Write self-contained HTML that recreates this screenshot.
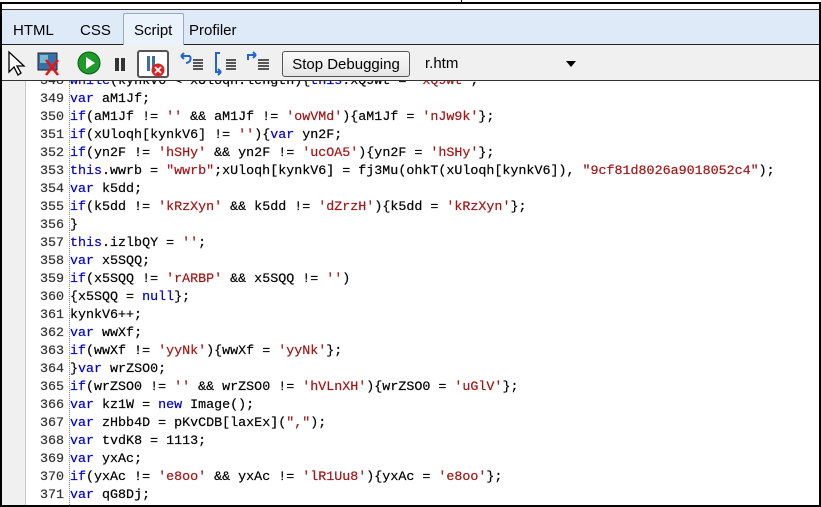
<!DOCTYPE html>
<html><head><meta charset="utf-8"><style>
*{margin:0;padding:0;box-sizing:border-box}
body{width:821px;height:507px;overflow:hidden;background:#fff;position:relative;font-family:"Liberation Sans",sans-serif}
.abs{position:absolute}
#code{position:absolute;left:2px;top:81px;width:817px;height:424px;overflow:hidden;background:#fff}
#gut{position:absolute;left:0;top:0;width:24px;height:100%;background:#f0f0f0;border-right:1px solid #c8c8c8}
#dots{position:absolute;left:67px;top:0;height:100%;border-left:1px dotted #888}
.lines{position:absolute;top:-8px;left:0;font-family:"Liberation Mono",monospace;font-size:13.35px;line-height:18px;white-space:pre;color:#000;-webkit-text-stroke:0.2px}
.ln{position:absolute;left:30px;width:32px;text-align:right;color:#333}
.tx{position:absolute;left:68px}
.k{color:#0000cc}.s{color:#a31515}
.tab{position:absolute;top:15px;font-size:15px;height:31px;line-height:32px}
.btn{position:absolute;top:51px;font-size:15px}
</style></head><body>
<div class="abs" style="left:0;top:2px;width:821px;height:505px;border:2px solid #000;border-bottom-width:2px"></div>
<div class="abs" style="left:461px;top:0;width:1px;height:4px;background:#000"></div>
<div class="abs" style="left:2px;top:9px;width:817px;height:35px;background:#dfeaf8;border-top:1px solid #333"></div>
<div class="abs" style="left:2px;top:44px;width:817px;height:1px;background:#222"></div>
<div class="abs" style="left:2px;top:45px;width:817px;height:35px;background:#f0f0f0"></div>
<div class="abs" style="left:2px;top:80px;width:817px;height:1px;background:#333"></div>
<div class="abs" style="left:123px;top:13px;width:61px;height:32px;background:#eaf2fc;border:1px solid #9ab;border-bottom:none;border-radius:2px 2px 0 0"></div>
<div class="tab" style="left:13px">HTML</div>
<div class="tab" style="left:80px">CSS</div>
<div class="tab" style="left:134px">Script</div>
<div class="tab" style="left:189px">Profiler</div>
<svg class="abs" style="left:6px;top:50px" width="22" height="28"><path d="M3 2 L3 22 L8 17 L12 25 L15 23 L11 16 L18 16 Z" fill="#fff" stroke="#000" stroke-width="1.3"/></svg>
<svg class="abs" style="left:36px;top:50px" width="26" height="28"><rect x="2" y="3" width="19" height="17" fill="#3a6ea8" stroke="#222"/><rect x="4" y="5" width="8" height="8" fill="#7bc"/><path d="M10 10 L22 25 M22 10 L10 25" stroke="#e11" stroke-width="2.5"/></svg>
<svg class="abs" style="left:77px;top:50px" width="26" height="26"><circle cx="12" cy="13" r="11" fill="#1c9a2a" stroke="#0a5a14"/><path d="M9 7 L18 13 L9 19 Z" fill="#fff"/></svg>
<div class="abs" style="left:115px;top:58px;width:4px;height:13px;background:#333"></div>
<div class="abs" style="left:121px;top:58px;width:4px;height:13px;background:#333"></div>
<div class="abs" style="left:137px;top:50px;width:32px;height:28px;border:2px solid #555;border-radius:3px;background:#fff"></div>
<div class="abs" style="left:147px;top:56px;width:3px;height:15px;background:#3a6ea8"></div>
<div class="abs" style="left:152px;top:56px;width:3px;height:15px;background:#3a6ea8"></div>
<svg class="abs" style="left:150px;top:62px" width="16" height="16"><circle cx="8" cy="8" r="6.5" fill="#d22"/><path d="M5 5 L11 11 M11 5 L5 11" stroke="#fff" stroke-width="1.8"/></svg>
<svg class="abs" style="left:178px;top:50px" width="30" height="26"><path d="M3 6 H12 M3 6 L6 3 M3 6 L6 9" stroke="#2266cc" stroke-width="2" fill="none"/><path d="M12 6 Q14 12 8 13" stroke="#2266cc" stroke-width="2" fill="none"/><path d="M15 10H25M15 13H25M15 16H25M15 19H25" stroke="#222" stroke-width="1.5"/></svg>
<svg class="abs" style="left:212px;top:50px" width="30" height="28"><path d="M8 3 H4 V22 H9 M9 22 L6 19 M9 22 L6 25" stroke="#2266cc" stroke-width="2" fill="none"/><path d="M14 10H24M14 13H24M14 16H24M14 19H24" stroke="#222" stroke-width="1.5"/></svg>
<svg class="abs" style="left:244px;top:50px" width="30" height="26"><path d="M4 10 V5 H12 M12 5 L9 2 M12 5 L9 8" stroke="#2266cc" stroke-width="2" fill="none"/><path d="M14 10H25M14 13H25M14 16H25M14 19H25" stroke="#222" stroke-width="1.5"/></svg>
<div class="abs" style="left:282px;top:51px;width:128px;height:26px;border:1px solid #555;border-radius:3px;background:linear-gradient(#fafafa,#e6e6e6);font-size:15px;line-height:25px;text-align:center">Stop Debugging</div>
<div class="abs" style="left:425px;top:55px;font-size:15px">r.htm</div>
<svg class="abs" style="left:565px;top:60px" width="12" height="8"><path d="M1 1 H11 L6 7 Z" fill="#000"/></svg>
<div id="code"><div id="gut"></div><div id="dots"></div>
<div class="lines">
<div class="ln" style="top:0">348</div><div class="tx" style="top:0"><span class="k">while</span>(kynkV6 &lt; xUloqh.length){<span class="k">this</span>.xQ9wt = <span class="s">'xQ9wt'</span>;</div>
<div class="ln" style="top:18px">349</div><div class="tx" style="top:18px"><span class="k">var</span> aM1Jf;</div>
<div class="ln" style="top:36px">350</div><div class="tx" style="top:36px"><span class="k">if</span>(aM1Jf != <span class="s">''</span> &amp;&amp; aM1Jf != <span class="s">'owVMd'</span>){aM1Jf = <span class="s">'nJw9k'</span>};</div>
<div class="ln" style="top:54px">351</div><div class="tx" style="top:54px"><span class="k">if</span>(xUloqh[kynkV6] != <span class="s">''</span>){<span class="k">var</span> yn2F;</div>
<div class="ln" style="top:72px">352</div><div class="tx" style="top:72px"><span class="k">if</span>(yn2F != <span class="s">'hSHy'</span> &amp;&amp; yn2F != <span class="s">'ucOA5'</span>){yn2F = <span class="s">'hSHy'</span>};</div>
<div class="ln" style="top:90px">353</div><div class="tx" style="top:90px"><span class="k">this</span>.wwrb = <span class="s">"wwrb"</span>;xUloqh[kynkV6] = fj3Mu(ohkT(xUloqh[kynkV6]), <span class="s">"9cf81d8026a9018052c4"</span>);</div>
<div class="ln" style="top:108px">354</div><div class="tx" style="top:108px"><span class="k">var</span> k5dd;</div>
<div class="ln" style="top:126px">355</div><div class="tx" style="top:126px"><span class="k">if</span>(k5dd != <span class="s">'kRzXyn'</span> &amp;&amp; k5dd != <span class="s">'dZrzH'</span>){k5dd = <span class="s">'kRzXyn'</span>};</div>
<div class="ln" style="top:144px">356</div><div class="tx" style="top:144px">}</div>
<div class="ln" style="top:162px">357</div><div class="tx" style="top:162px"><span class="k">this</span>.izlbQY = <span class="s">''</span>;</div>
<div class="ln" style="top:180px">358</div><div class="tx" style="top:180px"><span class="k">var</span> x5SQQ;</div>
<div class="ln" style="top:198px">359</div><div class="tx" style="top:198px"><span class="k">if</span>(x5SQQ != <span class="s">'rARBP'</span> &amp;&amp; x5SQQ != <span class="s">''</span>)</div>
<div class="ln" style="top:216px">360</div><div class="tx" style="top:216px">{x5SQQ = <span class="k">null</span>};</div>
<div class="ln" style="top:234px">361</div><div class="tx" style="top:234px">kynkV6++;</div>
<div class="ln" style="top:252px">362</div><div class="tx" style="top:252px"><span class="k">var</span> wwXf;</div>
<div class="ln" style="top:270px">363</div><div class="tx" style="top:270px"><span class="k">if</span>(wwXf != <span class="s">'yyNk'</span>){wwXf = <span class="s">'yyNk'</span>};</div>
<div class="ln" style="top:288px">364</div><div class="tx" style="top:288px">}<span class="k">var</span> wrZSO0;</div>
<div class="ln" style="top:306px">365</div><div class="tx" style="top:306px"><span class="k">if</span>(wrZSO0 != <span class="s">''</span> &amp;&amp; wrZSO0 != <span class="s">'hVLnXH'</span>){wrZSO0 = <span class="s">'uGlV'</span>};</div>
<div class="ln" style="top:324px">366</div><div class="tx" style="top:324px"><span class="k">var</span> kz1W = <span class="k">new</span> Image();</div>
<div class="ln" style="top:342px">367</div><div class="tx" style="top:342px"><span class="k">var</span> zHbb4D = pKvCDB[laxEx](<span class="s">","</span>);</div>
<div class="ln" style="top:360px">368</div><div class="tx" style="top:360px"><span class="k">var</span> tvdK8 = 1113;</div>
<div class="ln" style="top:378px">369</div><div class="tx" style="top:378px"><span class="k">var</span> yxAc;</div>
<div class="ln" style="top:396px">370</div><div class="tx" style="top:396px"><span class="k">if</span>(yxAc != <span class="s">'e8oo'</span> &amp;&amp; yxAc != <span class="s">'lR1Uu8'</span>){yxAc = <span class="s">'e8oo'</span>};</div>
<div class="ln" style="top:414px">371</div><div class="tx" style="top:414px"><span class="k">var</span> qG8Dj;</div>
</div></div>
</body></html>
